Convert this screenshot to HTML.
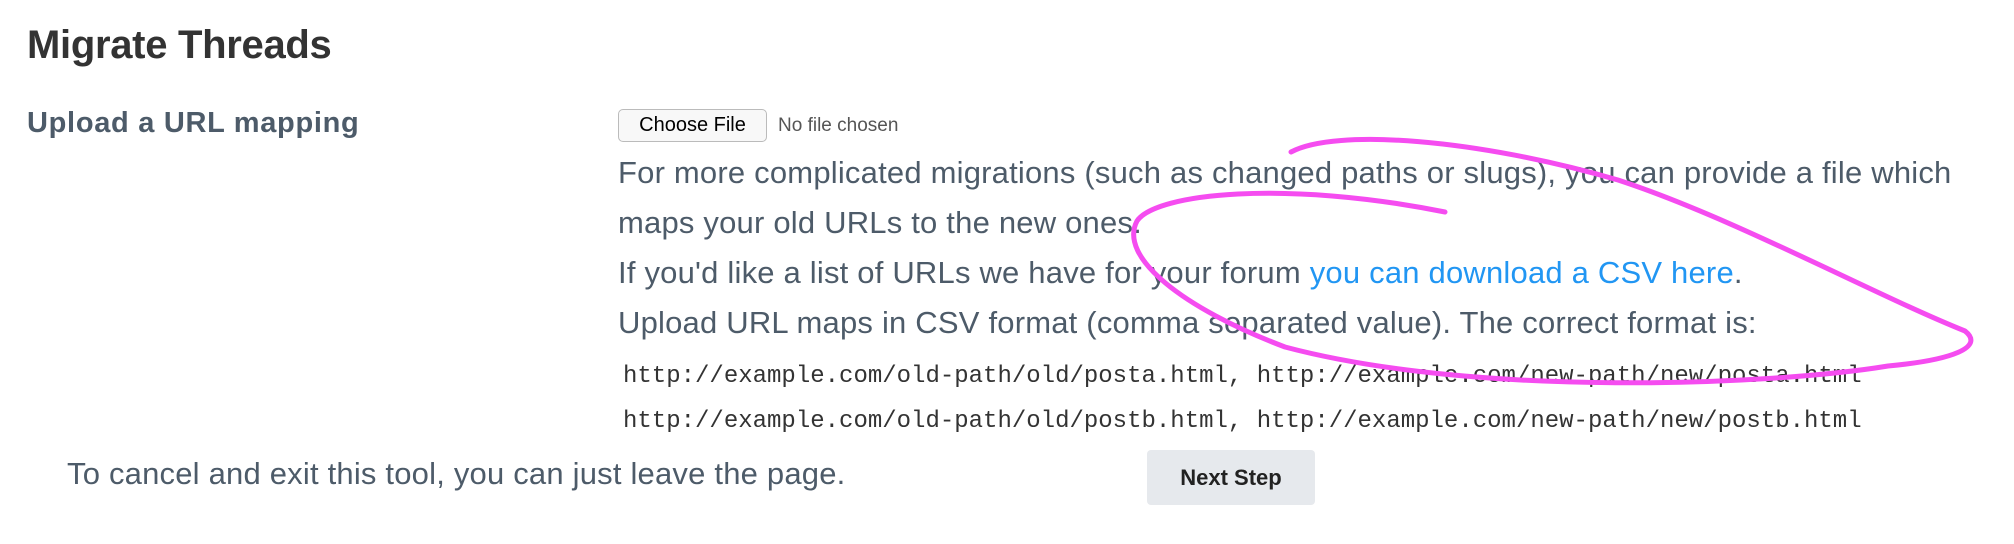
<!DOCTYPE html>
<html><head><meta charset="utf-8"><style>
body{margin:0;width:2014px;height:544px;background:#fff;position:relative;overflow:hidden;font-family:"Liberation Sans",sans-serif;}
.a{position:absolute;white-space:nowrap;}
h1{position:absolute;left:27px;top:23px;margin:0;font-size:40px;font-weight:bold;color:#333;letter-spacing:-0.3px;}
.lab{left:27px;top:107px;font-size:29px;font-weight:bold;color:#4d5b69;letter-spacing:0.7px;}
.btn{left:618px;top:109px;width:149px;height:33px;border:1px solid #bbb;border-radius:5px;background:#f8f8f8;box-sizing:border-box;font-size:20px;color:#000;text-align:center;line-height:31px;}
.nf{left:778px;top:115px;font-size:19px;color:#555;}
.p{left:618px;font-size:31px;color:#4d5b69;letter-spacing:0.2px;}
.p a{color:#2196f3;text-decoration:none;}
.m{left:623px;font-family:"Liberation Mono",monospace;font-size:24px;color:#333;letter-spacing:0px;}
.nx{left:1147px;top:450px;width:168px;height:55px;background:#e6e9ed;border-radius:4px;text-align:center;line-height:55px;font-size:22px;font-weight:bold;color:#222;}
</style></head><body>
<h1>Migrate Threads</h1>
<div class="a lab">Upload a URL mapping</div>
<div class="a btn">Choose File</div>
<div class="a nf">No file chosen</div>
<div class="a p" style="top:155px">For more complicated migrations (such as changed paths or slugs), you can provide a file which</div>
<div class="a p" style="top:205px">maps your old URLs to the new ones.</div>
<div class="a p" style="top:255px">If you'd like a list of URLs we have for your forum <a>you can download a CSV here</a>.</div>
<div class="a p" style="top:305px">Upload URL maps in CSV format (comma separated value). The correct format is:</div>
<div class="a m" style="top:363px">http://example.com/old-path/old/posta.html, http://example.com/new-path/new/posta.html</div>
<div class="a m" style="top:408px">http://example.com/old-path/old/postb.html, http://example.com/new-path/new/postb.html</div>
<div class="a p" style="left:67px;top:456px">To cancel and exit this tool, you can just leave the page.</div>
<div class="a nx">Next Step</div>
<svg class="a" style="left:0;top:0" width="2014" height="544"><path d="M1291,152 C1336,128 1477,139 1618,180 C1734,218 1875,295 1965,331 C1985,347 1953,360 1888,366 C1773,385 1477,398 1285,347 C1182,308 1118,257 1137,221 C1156,193 1285,180 1445,212" fill="none" stroke="#f54cf0" stroke-width="5" stroke-linecap="round"/></svg>
</body></html>
